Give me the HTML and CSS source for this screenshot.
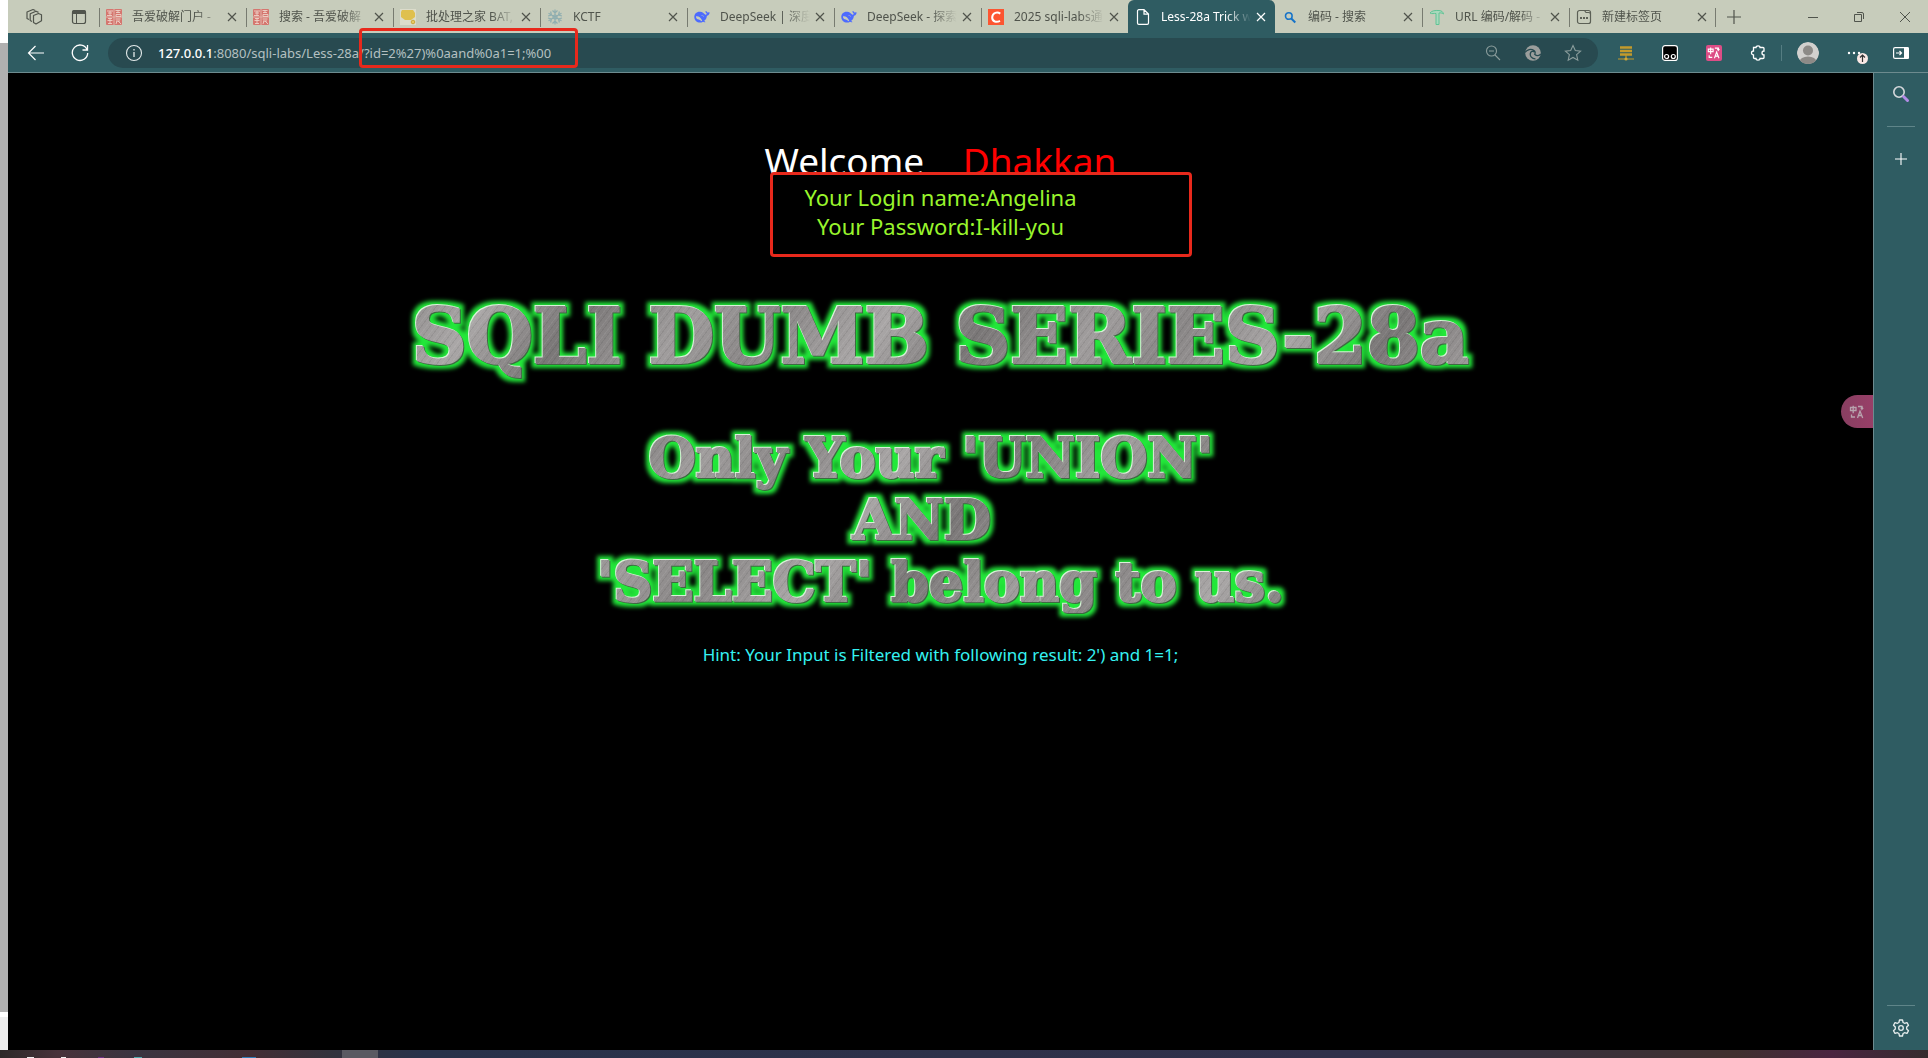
FILE: index.html
```html
<!DOCTYPE html>
<html lang="zh-CN">
<head>
<meta charset="utf-8">
<meta name="viewport" content="width=device-width, initial-scale=1">
<title>Less-28a Trick with comments</title>
<link rel="stylesheet" href="styles.css">
</head>
<body>
<svg class="defs" aria-hidden="true">
  <defs>
    <symbol id="x" viewBox="0 0 12 12"><path d="M2 2l8 8M10 2l-8 8" fill="none" stroke="currentColor" stroke-width="1.2"/></symbol>
    <symbol id="pj" viewBox="0 0 16 16"><rect width="16" height="16" rx="1" fill="#d5766f"/><path d="M8 0v16M0 8h16" stroke="#e2b3aa" stroke-width="1"/><path d="M1 2h6M2 4h4M4 2v5M1 6.500h5M9.500 1.500h5M10 3.500h4M12 1v3M10 5.500h5v2h-5zM2 9.500h4M1.500 11.500h5M4 9v6M2 14.500h4M9.500 10h5M10 12h4M11 12l-1 3M12 12l3 3" fill="none" stroke="#edd2c8" stroke-width=".9"/></symbol>
    <symbol id="whale" viewBox="0 0 16 16"><path d="M15.700 3.200c-1 .4-1.500.1-2 .6-.3-1-.9-1.500-2.200-1.900 0 1.500.4 2.100 1.400 2.900-.3.700-.8 1-1.500 1C9.800 4.600 8.500 2.800 6.100 2.800 2.600 2.500.3 4.900.3 8c0 3.300 2.600 5.600 5.700 5.600 1.200 0 2.100-.2 3-.8.8.5 2 .7 2.500.2-.5-.3-1-.7-1.300-1.200 2-1.300 2.600-3.200 2.700-5 1.600-.2 2.500-1.500 2.800-3.600z" fill="#4d6bfe"/><path d="M2 7.300c2.600-.6 4.500 1.200 5.900 3.700.6 1-.2 1.500-.9.800C5.500 10.500 4 10.300 3 10 2.200 9.200 1.900 8.400 2 7.300zM7 6c1.200-.5 2.700.6 2.900 2" fill="#c7ccbb"/><circle cx="8.300" cy="7.200" r=".7" fill="#4d6bfe"/></symbol>
    <symbol id="trans" viewBox="0 0 16 16"><path d="M1.500 3.500h5.500v3H1.500zM4.200 1.800v7.500M9 2.500h4v2.500l1.200-1.300M13 5l-1.200-1.300M2.500 10.500v2.500h3.500M8.500 14l2.500-7 2.700 7M9.500 11.500h3.200" fill="none" stroke="currentColor" stroke-width="1.300"/></symbol>
    <filter id="glow" x="-5%" y="-25%" width="110%" height="150%" color-interpolation-filters="sRGB">
      <feMorphology in="SourceAlpha" operator="dilate" radius="4" result="fat"/>
      <feGaussianBlur in="fat" stdDeviation="2" result="soft"/>
      <feFlood flood-color="#22e83a"/>
      <feComposite in2="soft" operator="in" result="green"/>
      <feOffset in="SourceAlpha" dx="-1" dy="-1" result="up"/>
      <feFlood flood-color="#d8f2d8"/>
      <feComposite in2="up" operator="in" result="light"/>
      <feOffset in="SourceAlpha" dx="1" dy="1" result="down"/>
      <feFlood flood-color="#3c6b40"/>
      <feComposite in2="down" operator="in" result="dark"/>
      <feMerge><feMergeNode in="green"/><feMergeNode in="dark"/><feMergeNode in="light"/><feMergeNode in="SourceGraphic"/></feMerge>
    </filter>
  </defs>
</svg>

<div class="desktop">
  <div class="behind" aria-hidden="true"></div>
  <div class="window">
    <header class="tabbar">
      <button class="strip-btn" aria-label="工作区"><svg width="18" height="18" viewBox="0 0 18 18"><g fill="none" stroke="currentColor" stroke-width="1.200" stroke-linejoin="round"><path d="M8.500 7.500l5-2 3 1.200v6l-5.500 3.300-2.500-1.500z"/><path d="M7 13.500l-1.800-1V5.800L11 3.200l2.500 1.200M4 11.500l-2-1V4L8 1.500l2.300 1"/></g></svg></button>
      <button class="strip-btn" aria-label="标签操作菜单"><svg width="16" height="16" viewBox="0 0 16 16"><rect x="1.500" y="1.500" width="13" height="13" rx="2" fill="none" stroke="currentColor" stroke-width="1.200"/><path d="M1 3a2 2 0 0 1 2-2h10a2 2 0 0 1 2 2v2H1z" fill="currentColor"/><path d="M5.500 5v9.500" stroke="currentColor"/></svg></button>
      <nav class="tabs" aria-label="标签页">
        <div class="tab"><svg class="fav"><use href="#pj"/></svg><a href="#">吾爱破解门户 -</a><button aria-label="关闭"><svg><use href="#x"/></svg></button></div>
        <div class="tab"><svg class="fav"><use href="#pj"/></svg><a href="#">搜索 - 吾爱破解</a><button aria-label="关闭"><svg><use href="#x"/></svg></button></div>
        <div class="tab"><svg class="fav" viewBox="0 0 16 16"><rect width="16" height="16" fill="#dcdccb"/><path d="M2 1h11l2 3v4l-4 3H5L1 8V3z" fill="#dfc04e"/><circle cx="13" cy="13" r="1.800" fill="#e5c964" stroke="#cda83a"/></svg><a href="#">批处理之家 BAT,</a><button aria-label="关闭"><svg><use href="#x"/></svg></button></div>
        <div class="tab"><svg class="fav" viewBox="0 0 16 16"><g fill="none" stroke="#8faeb0" stroke-width="1.200"><path d="M8 .5v15M1.500 4.200l13 7.600M1.500 11.800l13-7.600M5.500 1.500L8 4l2.500-2.500M5.500 14.500L8 12l2.500 2.500M1 7l3.500-1L3.600 2.500M15 7l-3.500-1 .9-3.500M1 9l3.500 1-.9 3.500M15 9l-3.500 1 .9 3.500"/><circle cx="8" cy="8" r="2"/></g></svg><a href="#">KCTF</a><button aria-label="关闭"><svg><use href="#x"/></svg></button></div>
        <div class="tab"><svg class="fav"><use href="#whale"/></svg><a href="#">DeepSeek | 深度</a><button aria-label="关闭"><svg><use href="#x"/></svg></button></div>
        <div class="tab"><svg class="fav"><use href="#whale"/></svg><a href="#">DeepSeek - 探索</a><button aria-label="关闭"><svg><use href="#x"/></svg></button></div>
        <div class="tab"><svg class="fav" viewBox="0 0 16 16"><rect width="16" height="16" fill="#fc5531"/><path d="M12.300 4.600C9.500 2.700 4.500 3.300 4.200 8.200c-.2 4.700 4.500 5.500 7.800 3.600" fill="none" stroke="#fff" stroke-width="2"/></svg><a href="#">2025 sqli-labs通</a><button aria-label="关闭"><svg><use href="#x"/></svg></button></div>
        <div class="tab active"><svg class="fav" viewBox="0 0 16 16"><path d="M2.500 2a1.300 1.300 0 0 1 1.300-1.300H9L13.500 5v9a1.300 1.300 0 0 1-1.300 1.300H3.800A1.300 1.300 0 0 1 2.500 14zM9 1v4.200h4.300" fill="none" stroke="#fff" stroke-width="1.200"/></svg><a href="#" aria-current="page">Less-28a Trick w</a><button aria-label="关闭"><svg><use href="#x"/></svg></button></div>
        <div class="tab plain"><svg class="fav" viewBox="0 0 16 16"><circle cx="6.800" cy="7" r="3.300" fill="none" stroke="#1673c8" stroke-width="1.600"/><path d="M9.300 9.500l4 4" stroke="#1673c8" stroke-width="2"/></svg><a href="#">编码 - 搜索</a><button aria-label="关闭"><svg><use href="#x"/></svg></button></div>
        <div class="tab"><svg class="fav" viewBox="0 0 16 16"><path d="M1 4c2-2.500 5-2.600 9-2.500 3 .3 4 1.500 4.500 3.500-1.500-1-3-1.300-4.500-1v11.500H7V4.500C5 4.200 3 5.200 1 4z" fill="#a9d9bd" stroke="#5fc495"/></svg><a href="#">URL 编码/解码 -</a><button aria-label="关闭"><svg><use href="#x"/></svg></button></div>
        <div class="tab"><svg class="fav" viewBox="0 0 16 16"><path d="M3.500 1.500h5l1.500 2h2.500a2 2 0 0 1 2 2v7a2 2 0 0 1-2 2h-9a2 2 0 0 1-2-2v-9a2 2 0 0 1 2-2zM8 1.500h4.500a2 2 0 0 1 2 2v2" fill="none" stroke="#5c6056" stroke-width="1.200"/><path d="M4 9h2M7 9h2M10 9h2" stroke="#5c6056" stroke-width="1.800"/></svg><a href="#">新建标签页</a><button aria-label="关闭"><svg><use href="#x"/></svg></button></div>
      </nav>
      <button class="newtab" aria-label="新建标签页"><svg width="16" height="16" viewBox="0 0 16 16"><path d="M8 1v14M1 8h14" stroke="currentColor" stroke-width="1.200"/></svg></button>
      <div class="wincontrols">
        <button aria-label="最小化"><svg width="12" height="12" viewBox="0 0 12 12"><path d="M1 6.500h10" stroke="currentColor"/></svg></button>
        <button aria-label="还原"><svg width="12" height="12" viewBox="0 0 12 12"><path d="M1.500 3.500h7v7h-7zM4 1.500h5a1.500 1.500 0 0 1 1.500 1.500v5" fill="none" stroke="currentColor"/></svg></button>
        <button aria-label="关闭窗口"><svg width="12" height="12" viewBox="0 0 12 12"><path d="M1 1l10 10M11 1L1 11" stroke="currentColor"/></svg></button>
      </div>
    </header>

    <div class="toolbar">
      <button class="tool" aria-label="返回"><svg width="18" height="18" viewBox="0 0 18 18"><path d="M17 9H1.500M8.500 2l-7 7 7 7" fill="none" stroke="#fff" stroke-width="1.200"/></svg></button>
      <button class="tool" aria-label="刷新"><svg width="18" height="18" viewBox="0 0 18 18"><path d="M16 5.500A7.700 7.700 0 1 0 16.700 9M16.500 1v5h-5" fill="none" stroke="#fff" stroke-width="1.300"/></svg></button>
      <form class="omnibox">
        <svg class="info" width="18" height="18" viewBox="0 0 18 18"><circle cx="9" cy="9" r="7.500" fill="none" stroke="#e4eaea" stroke-width="1.100"/><path d="M9 8v5M9 5v1.500" stroke="#e4eaea" stroke-width="1.300"/></svg>
        <label for="url">127.0.0.1</label>
        <input id="url" type="text" spellcheck="false" value=":8080/sqli-labs/Less-28a/?id=2%27)%0aand%0a1=1;%00">
        <button type="button" aria-label="缩小"><svg width="16" height="16" viewBox="0 0 16 16"><g fill="none" stroke="#8b9d9c" stroke-width="1.100"><circle cx="6.500" cy="6" r="5"/><path d="M10 10l5 5M4 6h5"/></g></svg></button>
        <button type="button" aria-label="Microsoft Edge"><svg width="16" height="16" viewBox="0 0 16 16"><circle cx="8" cy="8" r="7.800" fill="#9b9e9c"/><g fill="none" stroke="#284a50" stroke-width="1.300"><path d="M0 7.500C2 4.500 6 3.500 9 5.500c1.500 1 1.500 3 .3 4.300M5.500 8.500c0-2 2.500-3 4-1.500M5.500 8c-1 3 1.500 6 5 5.800M15.800 9c-1.500 2-4.300 2-5.800.5"/></g></svg></button>
        <button type="button" aria-label="收藏"><svg width="18" height="18" viewBox="0 0 18 18"><path d="M9 1.500l2.300 5 5.300.6-4 3.600 1.200 5.500L9 13.500l-4.800 2.700 1.200-5.500-4-3.600 5.300-.6z" fill="none" stroke="#8b9d9c" stroke-width="1.100"/></svg></button>
      </form>
      <div class="extensions">
        <button class="tool" aria-label="代理"><svg width="16" height="16" viewBox="0 0 16 16"><g stroke="#c49a2b" fill="none"><path d="M2 2.500h12M2 6h12M2 9.500h12" stroke-width="2.400"/><path d="M8 10v4M0 14h16" stroke-width="1.200"/></g><circle cx="8" cy="14" r="1.600" fill="#d0a837"/></svg></button>
        <button class="tool" aria-label="Tampermonkey"><svg width="16" height="16" viewBox="0 0 16 16"><rect x=".6" y=".6" width="14.800" height="14.800" rx="2.500" fill="#000" stroke="#fff" stroke-width="1.200"/><g fill="none" stroke="#fff" stroke-width="1.200"><circle cx="4.600" cy="11.500" r="2"/><circle cx="11.300" cy="11.500" r="2"/></g></svg></button>
        <button class="tool translate" aria-label="翻译"><svg width="14" height="14"><use href="#trans"/></svg></button>
        <button class="tool" aria-label="扩展"><svg width="16" height="16" viewBox="0 0 16 16"><path d="M3.500 2.500H6a2 1.600 0 0 1 4 0h3a1 1 0 0 1 1 1V6a2 2 0 1 0 0 4v2.500a1 1 0 0 1-1 1h-3a2 1.600 0 0 1-4 0H4.500a1 1 0 0 1-1-1V10a2 2 0 1 1 0-4z" fill="none" stroke="#fff" stroke-width="1.300"/></svg></button>
      </div>
      <span class="divider"></span>
      <button class="tool avatar" aria-label="个人资料"><svg width="22" height="22" viewBox="0 0 22 22"><clipPath id="c"><circle cx="11" cy="11" r="11"/></clipPath><g clip-path="url(#c)"><circle cx="11" cy="11" r="11" fill="#d2d0ce"/><circle cx="11" cy="8.500" r="5" fill="#8d8a87"/><ellipse cx="11" cy="20" rx="8.500" ry="5.500" fill="#8d8a87"/></g></svg></button>
      <button class="tool more" aria-label="设置及其他"><svg width="24" height="24" viewBox="0 0 24 24"><g fill="#fff"><circle cx="5" cy="12" r="1.200"/><circle cx="10" cy="12" r="1.200"/><circle cx="15" cy="12" r="1.200"/></g><circle cx="18.500" cy="17.500" r="5.500" fill="#fbe9e6"/><path d="M18.500 21v-7M16 16.500l2.500-2.500 2.500 2.500" fill="none" stroke="#333" stroke-width="1.200"/></svg></button>
      <button class="tool panel" aria-label="侧栏"><svg width="16" height="12" viewBox="0 0 16 12"><rect x=".6" y=".6" width="14.800" height="10.800" rx="1.500" fill="none" stroke="#fff" stroke-width="1.200"/><path d="M11 0h3.500A1.500 1.500 0 0 1 16 1.500v9a1.500 1.500 0 0 1-1.500 1.500H11z" fill="#fff"/><path d="M3 6h5.500M6.500 4l2 2-2 2" fill="none" stroke="#fff" stroke-width="1.200"/></svg></button>
      <div class="mark mark-url" aria-hidden="true"></div>
    </div>

    <div class="body">
      <main class="page">
        <p class="welcome">Welcome&nbsp;&nbsp;&nbsp; <span>Dhakkan</span></p>
        <p class="login">Your Login name:Angelina<br>Your Password:I-kill-you</p>
        <h1 class="metal title">SQLI DUMB SERIES-28a</h1>
        <h2 class="metal subtitle">Only Your 'UNION'&nbsp;<br>AND&nbsp;&nbsp;<br>'SELECT' belong to us.</h2>
        <p class="hint">Hint: Your Input is Filtered with following result: 2') and 1=1;</p>
        <div class="mark mark-login" aria-hidden="true"></div>
        <button class="bubble" aria-label="翻译网页"><svg width="16" height="16"><use href="#trans"/></svg></button>
      </main>
      <aside class="sidebar">
        <button aria-label="搜索"><svg width="18" height="18" viewBox="0 0 18 18"><circle cx="7" cy="7" r="5.200" fill="none" stroke="#d5d8dc" stroke-width="1.600"/><path d="M11.500 11.500l4 4" stroke="#b28be6" stroke-width="3" stroke-linecap="round"/></svg></button>
        <hr>
        <button aria-label="自定义"><svg width="12" height="12" viewBox="0 0 12 12"><path d="M6 0v12M0 6h12" stroke="#fff" stroke-width="1.100"/></svg></button>
        <hr class="low">
        <button aria-label="设置"><svg width="18" height="18" viewBox="0 0 18 18"><path d="M7.500 1h3l.6 2.500 1.400.8 2.500-.7 1.500 2.600L14.700 8v2l1.800 1.800-1.500 2.600-2.500-.7-1.400.8-.6 2.500h-3l-.6-2.500-1.400-.8-2.500.7-1.500-2.600L3.300 10V8L1.500 6.200 3 3.600l2.500.7 1.400-.8z" fill="none" stroke="#e8eeee" stroke-width="1.300" stroke-linejoin="round"/><circle cx="9" cy="9" r="2.300" fill="none" stroke="#e8eeee" stroke-width="1.300"/></svg></button>
      </aside>
    </div>
  </div>
  <footer class="taskbar" aria-hidden="true"><span class="running"></span></footer>
</div>
</body>
</html>
```

FILE: styles.css
```css
* { box-sizing: border-box; }

body {
  margin: 0;
  background: #000;
  font-family: "Noto Sans", "Noto Sans CJK SC", sans-serif;
  overflow: hidden;
}

button {
  display: flex;
  align-items: center;
  justify-content: center;
  padding: 0;
  border: 0;
  background: none;
  color: inherit;
}

.defs { position: absolute; width: 0; height: 0; }

/* Desktop */
.desktop {
  display: grid;
  grid-template-columns: 8px 1fr;
  grid-template-rows: 1fr 8px;
  height: 100vh;
}

.behind {
  background: linear-gradient(#fff 43px, #b0b0b0 43px, #b0b0b0 calc(100% - 38px), #fff calc(100% - 38px), #fff calc(100% - 33px), #eee calc(100% - 33px));
}

.window {
  display: flex;
  flex-direction: column;
  min-width: 0;
}

.taskbar {
  grid-column: 1 / -1;
  display: flex;
  padding-left: 342px;
  background:
    linear-gradient(#eee, #eee) 27px 100% / 7px 1px no-repeat,
    linear-gradient(#eee, #eee) 61px 100% / 5px 1px no-repeat,
    linear-gradient(#6d2f86, #6d2f86) 98px 100% / 6px 1px no-repeat,
    linear-gradient(#4fa9ac, #4fa9ac) 134px 100% / 8px 1px no-repeat,
    linear-gradient(#2f7db8, #2f7db8) 242px 100% / 14px 1px no-repeat,
    linear-gradient(90deg, #2c2828, #48323a 3%, #3a3440 7%, #432e35 13%, #33323c 17%, #28324a 22%, #2e3149 50%, #30304a 70%, #40302f 90%, #4a2440 95%, #352c2e);
}

.running { width: 36px; background: #5a5a62; }

/* Tab strip */
.tabbar {
  display: flex;
  align-items: center;
  height: 33px;
  background: #c7ccbb;
  color: #50544c;
}

.strip-btn { width: 40px; height: 32px; }
.strip-btn:first-child { width: 51px; }

.tabs {
  display: flex;
  align-self: stretch;
  flex: 0 1 1617px;
  min-width: 0;
}

.tab {
  display: flex;
  align-items: center;
  flex: 1 1 0;
  min-width: 0;
  gap: 10px;
  padding: 0 8px 0 7px;
  background: linear-gradient(#777b70, #777b70) 0 8px / 1px 19px no-repeat;
}

.tab:last-child {
  background: linear-gradient(#777b70, #777b70) 0 8px / 1px 19px no-repeat, linear-gradient(#777b70, #777b70) 100% 8px / 1px 19px no-repeat;
}

.tab.plain { background: none; }

.tab.active {
  background: #2f5c62;
  color: #fff;
  border-radius: 6px 6px 0 0;
}

.fav { flex: none; width: 16px; height: 16px; }

.tab a {
  flex: 1;
  min-width: 0;
  margin-right: -6px;
  overflow: hidden;
  white-space: nowrap;
  font-size: 12px;
  line-height: 20px;
  color: inherit;
  text-decoration: none;
  mask-image: linear-gradient(90deg, #000 72%, transparent);
}

.tab button { flex: none; width: 12px; height: 20px; }
.tab button svg { width: 12px; height: 12px; }

.newtab { width: 36px; height: 32px; }

.wincontrols { display: flex; margin-left: auto; }
.wincontrols button { width: 46px; height: 32px; }

/* Toolbar */
.toolbar {
  position: relative;
  display: flex;
  align-items: center;
  height: 40px;
  padding: 0 4px 0 6px;
  background: #2f5c62;
  border-bottom: 1px solid #6d8b8f;
}

.tool { flex: none; width: 44px; height: 32px; }

.omnibox {
  display: flex;
  align-items: center;
  flex: 1;
  min-width: 0;
  height: 30px;
  margin: 0 6px;
  padding: 0 5px 0 17px;
  border-radius: 15px;
  background: #284a50;
  font-size: 13px;
  line-height: 20px;
}

.info { flex: none; margin-right: 15px; }
.omnibox label { color: #fff; font-weight: 500; }

.omnibox input {
  flex: 1;
  min-width: 0;
  padding: 0;
  border: 0;
  outline: 0;
  background: none;
  color: #b4c0c1;
  font: inherit;
}

.omnibox button { flex: none; width: 40px; height: 28px; }

.extensions { display: flex; }

.translate svg {
  box-sizing: content-box;
  padding: 1px;
  border-radius: 2px;
  background: #dd4d86;
  color: #fff;
}

.divider { width: 1px; height: 16px; margin-left: 1px; background: #557d82; }
.avatar { width: 52px; }
.more { width: 44px; }
.panel { width: 46px; }

/* Web page */
.body { display: flex; flex: 1; min-height: 0; }

.page {
  position: relative;
  flex: 1;
  min-width: 0;
  padding-top: 66px;
  background: #000;
  text-align: center;
}

.page p, .page h1, .page h2 { margin: 0; }

.welcome {
  color: #fff;
  font-size: 37px;
  line-height: 44px;
}

.welcome span { color: #f00; }

.login {
  color: #99f52c;
  font-size: 22px;
  line-height: 29px;
}

.metal {
  color: transparent;
  font-family: "DejaVu Serif", serif;
  font-weight: 700;
  white-space: nowrap;
  -webkit-text-stroke: 2px transparent;
  background:
    repeating-linear-gradient(127deg, #fff1 0 1px, #0000 1px 3px, #0001 3px 4px, #0000 4px 7px),
    repeating-linear-gradient(127deg, #8a8787, #aaa7a7 90px, #7a7777 170px, #a09d9d 260px, #8a8787 330px);
  background-clip: text;
  filter: url(#glow);
}

.title {
  padding-top: 36px;
  font-size: 76px;
  line-height: 120px;
}

.subtitle {
  padding-top: 30px;
  font-size: 54px;
  line-height: 62px;
}

.hint {
  padding-top: 30px;
  color: #35f2f2;
  font-size: 17px;
  line-height: 24px;
}

.mark {
  position: absolute;
  border: 3px solid #e8291c;
  border-radius: 4px;
}

.mark-url { left: 351px; top: -5px; width: 219px; height: 40px; }
.mark-login { left: calc(50% - 171px); top: 99px; width: 422px; height: 85px; }

.bubble {
  position: absolute;
  right: 0;
  top: 322px;
  width: 32px;
  height: 33px;
  border-radius: 17px 0 0 17px;
  background: linear-gradient(90deg, #883f61, #983f68);
  color: #b8a3ae;
}

/* Sidebar */
.sidebar {
  display: flex;
  flex-direction: column;
  align-items: center;
  width: 55px;
  padding: 6px 0 7px;
  border-left: 1px solid #6d8b8f;
  background: #2f5c62;
}

.sidebar button { width: 40px; height: 30px; }
.sidebar hr { width: 28px; margin: 17px 0; border: 0; border-top: 1px solid #5f8589; }
.sidebar .low { margin: auto 0 7px; }
```
